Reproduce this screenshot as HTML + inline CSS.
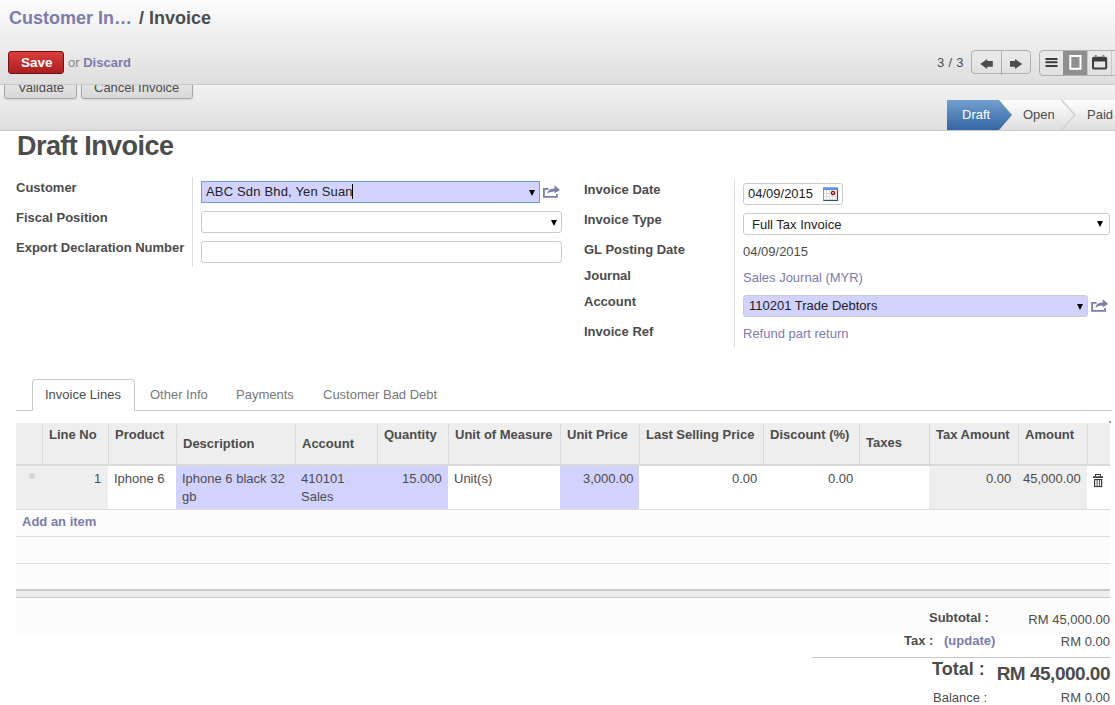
<!DOCTYPE html>
<html><head><meta charset="utf-8">
<style>
*{box-sizing:border-box;}
html,body{margin:0;padding:0;width:1115px;height:705px;overflow:hidden;background:#fff;}
body{font-family:"Liberation Sans",sans-serif;font-size:13px;color:#4c4c4c;position:relative;}
.a{position:absolute;white-space:nowrap;line-height:13px;}
.b{font-weight:bold;}
.lnk{color:#7c7bad;}
#vmh{position:absolute;left:0;top:0;width:1115px;height:85px;background:linear-gradient(#fcfcfc,#dedede);border-bottom:1px solid #cacaca;z-index:5;}
#fh{position:absolute;left:0;top:62px;width:1115px;height:69px;background:linear-gradient(#fcfcfc,#dedede);border-bottom:1px solid #cacaca;}
.btn{position:absolute;border:1px solid #a6a6a6;border-radius:3px;background:linear-gradient(#efefef,#d8d8d8);box-shadow:0 1px 2px rgba(0,0,0,.1);}
.lbl{position:absolute;white-space:nowrap;line-height:13px;font-weight:bold;}
.inp{position:absolute;border:1px solid #cccccc;border-radius:3px;background:#fff;}
.req{background:#d2d2ff;}
.arr{position:absolute;width:0;height:0;border-left:3px solid transparent;border-right:3px solid transparent;border-top:6px solid #000;}
.vl{position:absolute;width:1px;background:#dddddd;}
</style></head>
<body>

<!-- view manager header -->
<div id="vmh">
  <div class="a b" style="left:9px;top:9px;font-size:18px;line-height:18px;"><span class="lnk">Customer In…</span>&nbsp; <span style="color:#4c4c4c;margin-left:-3px">/ Invoice</span></div>
  <div style="position:absolute;left:8px;top:51px;width:56px;height:23px;border:1px solid #701212;border-radius:3px;background:linear-gradient(#db3e3b,#a91f1f);"></div>
  <div class="a b" style="left:21px;top:56px;color:#fff;font-size:13.5px;line-height:14px;">Save</div>
  <div class="a" style="left:68px;top:56px;"><span style="color:#888">or</span> <span class="lnk b">Discard</span></div>

  <div class="a" style="left:937px;top:56px;letter-spacing:0.3px;">3 / 3</div>
  <div style="position:absolute;left:971px;top:50px;width:60px;height:24px;border:1px solid #b0b0b0;border-radius:4px;"></div>
  <div style="position:absolute;left:1001px;top:50px;width:1px;height:25px;background:#b0b0b0;"></div>
  <div style="position:absolute;left:1039px;top:50px;width:80px;height:26px;border:1px solid #b0b0b0;border-radius:4px;"></div>
  <div style="position:absolute;left:1063px;top:51px;width:24px;height:24px;background:#8f8f8f;"></div>
  <div style="position:absolute;left:1087px;top:51px;width:1px;height:24px;background:#c8c8c8;"></div>
  <div style="position:absolute;left:1111px;top:51px;width:1px;height:24px;background:#c8c8c8;"></div>
</div>

<!-- form header -->
<div id="fh"></div>
<div class="btn" style="left:4px;top:70px;width:73px;height:29px;z-index:2;"></div>
<div class="btn" style="left:81px;top:70px;width:112px;height:29px;z-index:2;"></div>
<div class="a" style="left:18px;top:81px;z-index:3;">Validate</div>
<div class="a" style="left:94px;top:81px;z-index:3;">Cancel Invoice</div>

<!-- statusbar -->
<div class="a" style="left:962px;top:108px;color:#fff;z-index:21;">Draft</div>
<div class="a" style="left:1023px;top:108px;z-index:21;">Open</div>
<div class="a" style="left:1087px;top:108px;z-index:21;">Paid</div>

<!-- title -->
<div class="a b" style="left:17px;top:133px;font-size:27px;line-height:27px;letter-spacing:-0.55px;">Draft Invoice</div>

<!-- left group -->
<div class="lbl" style="left:16px;top:181px;">Customer</div>
<div class="lbl" style="left:16px;top:211px;">Fiscal Position</div>
<div class="lbl" style="left:16px;top:241px;">Export Declaration Number</div>
<div class="vl" style="left:192px;top:177px;height:90px;"></div>
<div class="inp req" style="left:201px;top:181px;width:339px;height:22px;border-color:#6a9fd8;border-radius:0;"></div>
<div class="a" style="left:206px;top:184px;color:#222;letter-spacing:0.17px;">ABC Sdn Bhd, Yen Suan<span style="display:inline-block;width:1px;height:15px;background:#000;vertical-align:-3px;margin-left:-1px;"></span></div>
<div class="arr" style="left:529px;top:190px;"></div>
<div class="inp" style="left:201px;top:211px;width:361px;height:22px;"></div>
<div class="arr" style="left:551px;top:220px;"></div>
<div class="inp" style="left:201px;top:241px;width:361px;height:22px;"></div>

<!-- right group -->
<div class="lbl" style="left:584px;top:183px;">Invoice Date</div>
<div class="lbl" style="left:584px;top:213px;">Invoice Type</div>
<div class="lbl" style="left:584px;top:243px;">GL Posting Date</div>
<div class="lbl" style="left:584px;top:269px;">Journal</div>
<div class="lbl" style="left:584px;top:295px;">Account</div>
<div class="lbl" style="left:584px;top:325px;">Invoice Ref</div>
<div class="vl" style="left:734px;top:179px;height:168px;"></div>
<div class="inp" style="left:743px;top:183px;width:100px;height:22px;"></div>
<div class="a" style="left:748px;top:187px;color:#222;">04/09/2015</div>
<div class="inp" style="left:743px;top:213px;width:367px;height:22px;"></div>
<div class="a" style="left:752px;top:218px;color:#222;">Full Tax Invoice</div>
<div class="arr" style="left:1097px;top:221px;"></div>
<div class="a" style="left:743px;top:245px;">04/09/2015</div>
<div class="a lnk" style="left:743px;top:271px;">Sales Journal (MYR)</div>
<div class="inp req" style="left:743px;top:295px;width:345px;height:22px;"></div>
<div class="a" style="left:749px;top:299px;color:#222;">110201 Trade Debtors</div>
<div class="arr" style="left:1077px;top:304px;"></div>
<div class="a lnk" style="left:743px;top:327px;">Refund part return</div>

<!-- tabs -->
<div style="position:absolute;left:16px;top:410px;width:1096px;height:1px;background:#cacaca;"></div>
<div style="position:absolute;left:32px;top:379px;width:103px;height:32px;border:1px solid #cacaca;border-bottom:none;border-radius:4px 4px 0 0;background:#fff;"></div>
<div class="a" style="left:45px;top:388px;">Invoice Lines</div>
<div class="a" style="left:150px;top:388px;color:#777;">Other Info</div>
<div class="a" style="left:236px;top:388px;color:#777;">Payments</div>
<div class="a" style="left:323px;top:388px;color:#777;">Customer Bad Debt</div>


<!-- table -->
<div style="position:absolute;left:16px;top:423px;width:1094px;height:43px;background:#eeeeee;border-bottom:2px solid #dadada;"></div>
<div class="vl" style="left:42px;top:423px;height:42px;background:#dadada;"></div>
<div class="vl" style="left:108px;top:423px;height:42px;background:#dadada;"></div>
<div class="vl" style="left:176px;top:423px;height:42px;background:#dadada;"></div>
<div class="vl" style="left:295px;top:423px;height:42px;background:#dadada;"></div>
<div class="vl" style="left:377px;top:423px;height:42px;background:#dadada;"></div>
<div class="vl" style="left:448px;top:423px;height:42px;background:#dadada;"></div>
<div class="vl" style="left:560px;top:423px;height:42px;background:#dadada;"></div>
<div class="vl" style="left:639px;top:423px;height:42px;background:#dadada;"></div>
<div class="vl" style="left:763px;top:423px;height:42px;background:#dadada;"></div>
<div class="vl" style="left:859px;top:423px;height:42px;background:#dadada;"></div>
<div class="vl" style="left:929px;top:423px;height:42px;background:#dadada;"></div>
<div class="vl" style="left:1018px;top:423px;height:42px;background:#dadada;"></div>
<div class="vl" style="left:1087px;top:423px;height:42px;background:#dadada;"></div>

<div class="lbl" style="left:49px;top:428px;">Line No</div>
<div class="lbl" style="left:115px;top:428px;">Product</div>
<div class="lbl" style="left:183px;top:437px;">Description</div>
<div class="lbl" style="left:302px;top:437px;">Account</div>
<div class="lbl" style="left:384px;top:428px;">Quantity</div>
<div class="lbl" style="left:455px;top:428px;">Unit of Measure</div>
<div class="lbl" style="left:567px;top:428px;">Unit Price</div>
<div class="lbl" style="left:646px;top:428px;">Last Selling Price</div>
<div class="lbl" style="left:770px;top:428px;">Discount (%)</div>
<div class="lbl" style="left:866px;top:436px;">Taxes</div>
<div class="lbl" style="left:936px;top:428px;">Tax Amount</div>
<div class="lbl" style="left:1025px;top:428px;">Amount</div>

<div style="position:absolute;left:1109px;top:421px;width:2px;height:2px;background:#9a9a9a;"></div>
<div style="position:absolute;left:859px;top:423px;width:71px;height:42px;border:1px solid #d6d6d6;border-top:none;"></div>
<!-- row -->
<div style="position:absolute;left:16px;top:466px;width:92px;height:43px;background:#eeeeee;"></div>
<div style="position:absolute;left:176px;top:466px;width:272px;height:43px;background:#d2d2ff;"></div>
<div style="position:absolute;left:560px;top:466px;width:79px;height:43px;background:#d2d2ff;"></div>
<div style="position:absolute;left:929px;top:466px;width:158px;height:43px;background:#eeeeee;"></div>
<div style="position:absolute;left:16px;top:509px;width:1094px;height:1px;background:#dddddd;"></div>
<div style="position:absolute;left:29px;top:473px;width:6px;height:6px;border-radius:50%;background:#d6d6d6;"></div>
<div class="a" style="left:94px;top:472px;">1</div>
<div class="a" style="left:114px;top:472px;">Iphone 6</div>
<div class="a" style="left:182px;top:470px;line-height:18px;white-space:normal;width:110px;">Iphone 6 black 32 gb</div>
<div class="a" style="left:301px;top:470px;line-height:18px;white-space:normal;width:70px;">410101 Sales</div>
<div class="a" style="left:402px;top:472px;">15.000</div>
<div class="a" style="left:454px;top:472px;">Unit(s)</div>
<div class="a" style="left:583px;top:472px;">3,000.00</div>
<div class="a" style="left:732px;top:472px;">0.00</div>
<div class="a" style="left:828px;top:472px;">0.00</div>
<div class="a" style="left:986px;top:472px;">0.00</div>
<div class="a" style="left:1023px;top:472px;">45,000.00</div>

<div style="position:absolute;left:16px;top:510px;width:1094px;height:124px;background:#fcfcfc;"></div>
<div class="a b lnk" style="left:22px;top:515px;">Add an item</div>
<div style="position:absolute;left:16px;top:536px;width:1094px;height:1px;background:#dddddd;"></div>
<div style="position:absolute;left:16px;top:563px;width:1094px;height:1px;background:#dddddd;"></div>
<div style="position:absolute;left:16px;top:589px;width:1094px;height:9px;background:#eeeeee;border-top:2px solid #cacaca;border-bottom:1px solid #cacaca;"></div>

<!-- totals -->
<div class="lbl" style="left:929px;top:611px;">Subtotal :</div>
<div class="a" style="right:5px;top:613px;">RM 45,000.00</div>
<div class="lbl" style="left:904px;top:634px;">Tax :</div>
<div class="a b lnk" style="left:944px;top:634px;">(update)</div>
<div class="a" style="right:5px;top:635px;">RM 0.00</div>
<div style="position:absolute;left:812px;top:657px;width:298px;height:1px;background:#cacaca;"></div>
<div class="a b" style="left:932px;top:660px;font-size:18px;line-height:18px;">Total :</div>
<div class="a b" style="right:5px;top:664px;font-size:19px;line-height:19px;letter-spacing:-0.5px;">RM 45,000.00</div>
<div class="a" style="left:933px;top:691px;">Balance :</div>
<div class="a" style="right:5px;top:691px;">RM 0.00</div>

<!-- icons overlay -->
<svg style="position:absolute;left:0;top:0;z-index:20;pointer-events:none" width="1115" height="705" viewBox="0 0 1115 705">
  <defs>
    <linearGradient id="draftg" x1="0" y1="0" x2="0" y2="1"><stop offset="0" stop-color="#729fcf"/><stop offset="1" stop-color="#3465a4"/></linearGradient>
    <linearGradient id="stg" x1="0" y1="0" x2="0" y2="1"><stop offset="0" stop-color="#fdfdfd"/><stop offset="1" stop-color="#dedede"/></linearGradient>
    <linearGradient id="calg" x1="0" y1="0" x2="0" y2="1"><stop offset="0" stop-color="#8fb3ee"/><stop offset="1" stop-color="#4a7fdc"/></linearGradient>
  </defs>
  <!-- pager arrows -->
  <polygon fill="#4c4c4c" points="980.3,64 987.2,59 987.2,61 992.8,61 992.8,66.8 987.2,66.8 987.2,69"/>
  <polygon fill="#4c4c4c" points="1022.3,64 1015,59 1015,61 1010,61 1010,66.8 1015,66.8 1015,69"/>
  <!-- list icon -->
  <rect x="1045.5" y="58" width="12" height="2" fill="#3c3c3c"/>
  <rect x="1045.5" y="61.2" width="12" height="2" fill="#3c3c3c"/>
  <rect x="1045.5" y="65" width="12" height="2" fill="#3c3c3c"/>
  <!-- form icon -->
  <rect x="1070.3" y="56" width="10.2" height="12.8" fill="none" stroke="#ffffff" stroke-width="2"/>
  <!-- calendar view icon -->
  <rect x="1093" y="57.8" width="13.2" height="10.8" rx="1.2" fill="none" stroke="#3c3c3c" stroke-width="2"/>
  <rect x="1093" y="57" width="13.2" height="4.5" fill="#3c3c3c"/>
  <rect x="1095" y="55" width="1.6" height="2.5" fill="#7a7a7a"/>
  <rect x="1102.6" y="55" width="1.6" height="2.5" fill="#7a7a7a"/>
  <!-- statusbar -->
  <rect x="999" y="100" width="116" height="30" fill="url(#stg)"/>
  <polygon fill="url(#draftg)" points="947,100 999,100 1012,115 999,130 947,130"/>
  <polyline fill="none" stroke="#d2d2d2" stroke-width="1.6" points="1061,99.5 1075,115 1061,130.5"/>
  <!-- ext icons -->
  <g fill="#7c7bad" transform="translate(543,185)">
    <path d="M0,3 h5.5 v1.8 h-3.7 v6.2 h11.2 v-2 h1.8 v3.8 H0 z"/>
    <path d="M11.5,0.2 L17,5 L11.5,8.2 z"/>
    <path d="M4.2,8.6 Q5.2,3.6 11.8,3.6 V6.6 Q7.5,6.4 4.2,8.6 z"/>
  </g>
  <g fill="#7c7bad" transform="translate(1091.2,299)">
    <path d="M0,3 h5.5 v1.8 h-3.7 v6.2 h11.2 v-2 h1.8 v3.8 H0 z"/>
    <path d="M11.5,0.2 L17,5 L11.5,8.2 z"/>
    <path d="M4.2,8.6 Q5.2,3.6 11.8,3.6 V6.6 Q7.5,6.4 4.2,8.6 z"/>
  </g>
  <!-- date picker icon -->
  <g transform="translate(823,187)">
    <rect x="0.5" y="0.5" width="14" height="13" fill="#ffffff" stroke="#7f9fc8" stroke-width="1"/>
    <path d="M14.5,0.5 V13.5 H0.5" fill="none" stroke="#2f4d74" stroke-width="1.2"/>
    <rect x="0" y="0" width="15" height="3" fill="url(#calg)"/>
    <path d="M1,6.5 H14 M1,9.5 H14 M1,12.5 H14 M3.5,3 V13 M6.5,3 V13 M9.5,3 V13 M12.5,3 V13" stroke="#dcdcdc" stroke-width="1"/>
    <circle cx="10" cy="5.9" r="1.6" fill="none" stroke="#a00000" stroke-width="1.3"/>
  </g>
  <!-- trash icon -->
  <g fill="#3a3a3a">
    <rect x="1095" y="474" width="6" height="1"/>
    <rect x="1095" y="474" width="1" height="2.5"/>
    <rect x="1100" y="474" width="1" height="2.5"/>
    <rect x="1093" y="476.3" width="10" height="1.7"/>
    <rect x="1094" y="479" width="8.2" height="1.1"/>
    <rect x="1094" y="479" width="1.2" height="8"/>
    <rect x="1101" y="479" width="1.2" height="8"/>
    <rect x="1094" y="486" width="8.2" height="1.1"/>
    <rect x="1096.6" y="480" width="0.9" height="6"/>
    <rect x="1098.9" y="480" width="0.9" height="6"/>
  </g>
</svg>
</body></html>
